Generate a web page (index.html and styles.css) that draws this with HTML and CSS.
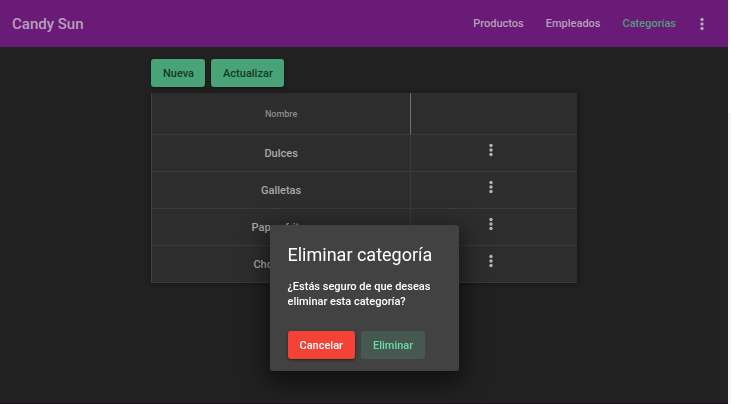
FILE: index.html
```html
<!DOCTYPE html>
<html lang="es">
<head>
<meta charset="utf-8">
<title>Candy Sun</title>
<link rel="stylesheet" href="styles.css">
</head>
<body>
<div class="app">
  <header class="toolbar">
    <h1 class="brand">Candy Sun</h1>
    <nav class="nav">
      <a href="#">Productos</a>
      <a href="#">Empleados</a>
      <a href="#" class="active">Categorías</a>
    </nav>
    <button class="more" aria-label="Menú"><svg viewBox="0 0 4 14"><circle cx="2" cy="2.5" r="1.7"/><circle cx="2" cy="7" r="1.7"/><circle cx="2" cy="11.5" r="1.7"/></svg></button>
  </header>
  <main class="content">
    <div class="actions">
      <button class="btn green">Nueva</button>
      <button class="btn green">Actualizar</button>
    </div>
    <table class="grid">
      <colgroup><col class="col-name"><col></colgroup>
      <thead><tr><th>Nombre</th><th></th></tr></thead>
      <tbody>
        <tr><td>Dulces</td><td><button class="more" aria-label="Opciones"><svg viewBox="0 0 4 14"><circle cx="2" cy="2.5" r="1.7"/><circle cx="2" cy="7" r="1.7"/><circle cx="2" cy="11.5" r="1.7"/></svg></button></td></tr>
        <tr><td>Galletas</td><td><button class="more" aria-label="Opciones"><svg viewBox="0 0 4 14"><circle cx="2" cy="2.5" r="1.7"/><circle cx="2" cy="7" r="1.7"/><circle cx="2" cy="11.5" r="1.7"/></svg></button></td></tr>
        <tr><td>Papas fritas</td><td><button class="more" aria-label="Opciones"><svg viewBox="0 0 4 14"><circle cx="2" cy="2.5" r="1.7"/><circle cx="2" cy="7" r="1.7"/><circle cx="2" cy="11.5" r="1.7"/></svg></button></td></tr>
        <tr><td>Chocolates</td><td><button class="more" aria-label="Opciones"><svg viewBox="0 0 4 14"><circle cx="2" cy="2.5" r="1.7"/><circle cx="2" cy="7" r="1.7"/><circle cx="2" cy="11.5" r="1.7"/></svg></button></td></tr>
      </tbody>
    </table>
  </main>
  <div class="overlay">
    <section class="dialog" role="dialog" aria-labelledby="dialog-title">
      <h2 id="dialog-title">Eliminar categoría</h2>
      <p>¿Estás seguro de que deseas eliminar esta categoría?</p>
      <div class="dialog-actions">
        <button class="btn red">Cancelar</button>
        <button class="btn tonal">Eliminar</button>
      </div>
    </section>
  </div>
</div>
</body>
</html>
```
FILE: styles.css
```css
* { box-sizing: border-box; }
body {
  margin: 0;
  background: linear-gradient(#fff 113px, #f6f6f6 113px);
  font-family: Roboto, "Liberation Sans", sans-serif;
  font-size: 11px;
  font-weight: 500;
}
.app {
  min-height: 100vh;
  margin-right: 3px;
  background: #212121;
  border-bottom: 1px solid #1c0e1d;
}
.toolbar {
  display: flex;
  align-items: center;
  height: 47px;
  padding: 0 24px 0 12px;
  background: #6a1b77;
}
.brand {
  margin: 0;
  font-size: 15px;
  font-weight: 500;
  color: #b89fbc;
}
.nav { display: flex; gap: 22px; margin-left: auto; }
.nav a { color: #b89fbc; text-decoration: none; }
.nav .active { color: #529b7b; }
.more {
  display: inline-flex;
  justify-content: center;
  padding: 0;
  border: 0;
  background: none;
  color: #b4b4b4;
}
.toolbar .more { margin-left: 24px; color: #b89fbc; }
.more svg { width: 4px; height: 14px; fill: currentColor; }
.content {
  width: 59%;
  margin: 0 auto;
  padding-top: 12px;
  max-width: 426px;
}
.actions { display: flex; gap: 6px; margin-bottom: 6px; }
.btn {
  height: 28px;
  padding: 0 12px;
  border: 0;
  border-radius: 3px;
  font: inherit;
}
.actions .btn { padding-right: 11px; }
.green { background: #48a477; color: #15382a; box-shadow: 0 1px 3px #0008; }
.grid {
  width: 100%;
  table-layout: fixed;
  border-collapse: separate;
  border-spacing: 0;
  border-left: 1px solid #444;
  background: #2d2d2d;
  color: #aaa;
  text-align: center;
  box-shadow: 0 1px 5px #0006;
}
.col-name { width: 61%; }
.grid th, .grid td {
  height: 37px;
  padding: 0;
  border-bottom: 1px solid #3a3a3a;
}
.grid th { height: 42px; font-size: 9px; font-weight: 500; color: #8c8c8c; }
.grid th:first-child { border-right: 1px solid #707070; }
.grid td:first-child { border-right: 1px solid #3a3a3a; }
.grid td:last-child { padding-right: 6px; }
.grid td .more { vertical-align: middle; margin-bottom: 6px; }
.overlay {
  position: fixed;
  inset: 0 3px 0 0;
  display: grid;
  justify-items: center;
  align-items: start;
  padding-top: 225px;
}
.dialog {
  width: 189px;
  padding: 18px;
  padding-bottom: 12px;
  border-radius: 3px;
  background: #424242;
  color: #fff;
  box-shadow: 0 8px 24px 4px #0008;
}
.dialog h2 {
  margin: 0 0 12px;
  font-size: 18px;
  font-weight: 400;
  line-height: 24px;
  white-space: nowrap;
}
.dialog p { margin: 0 0 22px; line-height: 15px; }
.dialog-actions { display: flex; gap: 6px; }
.red { background: #f44336; color: #fff; box-shadow: 0 1px 3px #0008; }
.tonal { background: #465850; color: #69dda4; }
```
